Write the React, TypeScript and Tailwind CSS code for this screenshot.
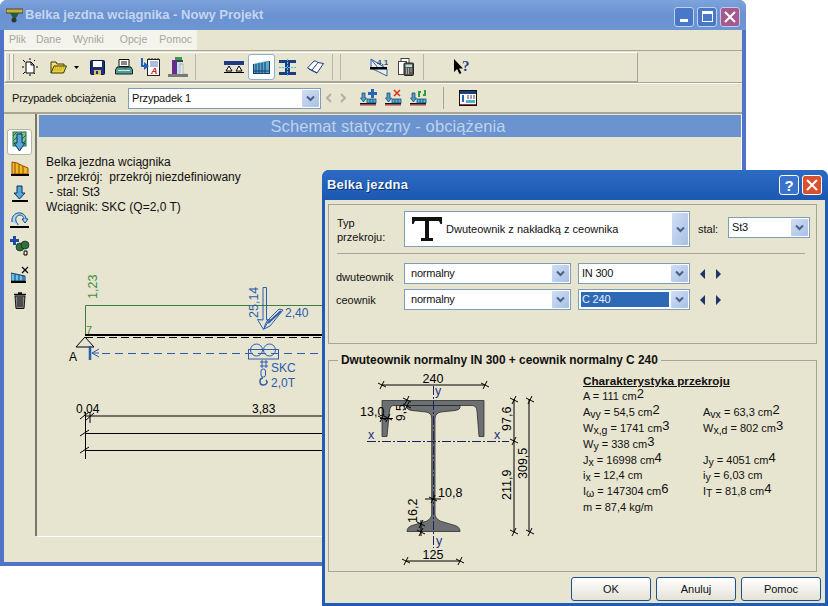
import React from 'react';

const FONT = "font-['Liberation_Sans',Arial,sans-serif]";

const Sep = ({ ml }: { ml: string }) => <div className={`${ml} w-[2px] h-[26px] border-l border-[#b8b5a2] border-r-white shrink-0`} />;

const NewDoc = () => (
  <svg width="17" height="18" viewBox="0 0 17 18" className="ml-[7px] shrink-0">
    <path d="M5 4h5l3 3v8H5z" fill="#fff" stroke="#000" />
    <path d="M10 4v3h3" fill="none" stroke="#000" />
    <path d="M1 9h2M15 9h2M2 2l2 2M14 2l-1 1M9 0v2M2 16l2-2M14 16l-1-1M9 16v2" stroke="#000" />
  </svg>
);
const Folder = () => (
  <svg width="17" height="15" viewBox="0 0 17 15" className="ml-[12px] shrink-0">
    <path d="M1 13V2h5l1 2h7v3" fill="#f5dc6c" stroke="#3a3a10" />
    <path d="M1 13l3-7h12.500l-3 7z" fill="#ecd23a" stroke="#3a3a10" />
    <path d="M5 8h9M4.500 10h8" stroke="#a88e10" strokeDasharray="1 1" />
  </svg>
);
const Floppy = () => (
  <svg width="15" height="15" viewBox="0 0 15 15" className="ml-[11px] shrink-0">
    <rect x="0.500" y="0.500" width="14" height="14" rx="1" fill="#1c2f7c" stroke="#0c1440" />
    <rect x="3" y="1" width="9" height="6" fill="#fff" />
    <rect x="4" y="10" width="7" height="5" fill="#e0c060" />
    <rect x="6" y="11" width="2" height="3" fill="#1c2f7c" />
  </svg>
);
const Printer = () => (
  <svg width="18" height="16" viewBox="0 0 18 16" className="ml-[10px] shrink-0">
    <path d="M4 .5h10v7H4z" fill="#fff" stroke="#111" />
    <path d="M6 3h6M6 5h6" stroke="#111" />
    <path d="M2 8h14l1.500 3v4H.5v-4z" fill="#4f9e96" stroke="#102020" />
    <rect x="3" y="11" width="12" height="1" fill="#c8e8e0" />
    <rect x="9" y="9" width="2" height="1" fill="#c03030" />
  </svg>
);
const Export = () => (
  <svg width="19" height="18" viewBox="0 0 19 18" className="ml-[8px] shrink-0">
    <rect x="6.500" y="1.500" width="12" height="16" fill="#fff" stroke="#222" />
    <path d="M8 1V0M11 1V0M14 1V0M17 1V0" stroke="#222" />
    <path d="M9 4h8M9 6h8M9 8h8" stroke="#5c7cc0" />
    <text x="10" y="16" fontSize="9" fontWeight="700" fontStyle="italic" fill="#d02020" fontFamily="Liberation Sans">A</text>
    <path d="M1 0v8h3" fill="none" stroke="#2262b8" strokeWidth="2" />
    <path d="M3 4l5 4-5 4z" fill="#2262b8" />
  </svg>
);
const Column = () => (
  <svg width="20" height="20" viewBox="0 0 20 20" className="ml-[8px] shrink-0">
    <rect x="7" y="0" width="7" height="3" fill="#2f9e50" />
    <rect x="4" y="3" width="5" height="14" fill="#6a2a90" />
    <rect x="9" y="3" width="6" height="14" fill="#b8e4e4" />
    <path d="M9 3h6v2H9z" fill="#444" />
    <path d="M12 7h3v10h4v1H12z" fill="#e8e8e8" stroke="#889" strokeWidth=".5" />
    <rect x="0" y="17" width="20" height="3" fill="#77797c" />
  </svg>
);
const BeamIcon = () => (
  <svg width="20" height="12" viewBox="0 0 20 12" className="ml-[27px] shrink-0">
    <rect x="0" y="0" width="20" height="4" fill="#1c3c84" />
    <path d="M5 5l-3 5h6zM15 5l-3 5h6z" fill="#fff" stroke="#000" />
    <path d="M0 11.500h20" stroke="#000" />
  </svg>
);
const Blocks = () => (
  <svg width="17" height="14" viewBox="0 0 17 14">
    <path d="M0 4l16-3.500V13H0z" fill="#5aa8c8" />
    <path d="M0 13.500h17M.5 4v9M16.500 1v12M3 4v9M6 3v10M9 3v10M12 2v11" stroke="#123c74" fill="none" />
    <path d="M1 11h15" stroke="#123c74" />
  </svg>
);
const IBeam = () => (
  <svg width="17" height="17" viewBox="0 0 17 17" className="ml-[4px] shrink-0">
    <path d="M0 1h17v3h-6v9h6v3H0v-3h6V4H0z" fill="#1c3c84" />
    <path d="M8.500 0v17M0 8.500h17" stroke="#48c0e0" strokeDasharray="2 1" />
  </svg>
);
const Book = () => (
  <svg width="17" height="14" viewBox="0 0 17 14" className="ml-[11px] shrink-0">
    <path d="M.5 8L7 1c2 0 3 .5 4 1.500l5.500 1L10 13 .5 8z" fill="#fff" stroke="#1c3c84" />
    <path d="M11 2.500L5 10M2 9l8 4" stroke="#1c3c84" fill="none" />
  </svg>
);
const MomentIcon = () => (
  <svg width="18" height="19" viewBox="0 0 18 19" className="ml-[28px] shrink-0">
    <path d="M1 1v9l16 8V11z" fill="#fff" fillOpacity=".35" stroke="#2a62b8" />
    <path d="M1 1l7 9" stroke="#2a62b8" />
    <rect x="0" y="9" width="17" height="2.500" fill="#000" />
    <text x="7" y="7" fontSize="8" fontWeight="700" fill="#2a4f90" fontFamily="Liberation Sans">4,1</text>
  </svg>
);
const Calc = () => (
  <svg width="16" height="18" viewBox="0 0 16 18" className="ml-[10px] shrink-0">
    <rect x="3" y=".5" width="8" height="12" fill="#fff" stroke="#444" />
    <rect x="0.500" y="3.500" width="8" height="13" fill="#fff" stroke="#444" />
    <rect x="6" y="5" width="9.500" height="12.500" rx="1" fill="#555" stroke="#222" />
    <rect x="7.500" y="6.500" width="6.500" height="2.500" fill="#b8e0d8" />
    <path d="M8 11h1M10 11h1M12.500 11h1M8 13h1M10 13h1M12.500 13h1M8 15h1M10 15h1" stroke="#fff" />
    <path d="M12.500 15h1" stroke="#e03020" />
  </svg>
);
const HelpCursor = () => (
  <svg width="20" height="20" viewBox="0 0 20 20" className="ml-[28px] shrink-0">
    <path d="M1 2v13l3-3 2.500 5 2-1-2.500-4.500h4z" fill="#000" />
    <text x="9" y="14" fontSize="15" fontWeight="700" fill="#2c3f80" fontFamily="Liberation Serif">?</text>
  </svg>
);

const LoadBase = ({ children, ml }: { children?: React.ReactNode; ml: string }) => (
  <svg width="17" height="18" viewBox="0 0 17 18" className={`${ml} shrink-0`}>
    <path d="M2 4h3v5h1.500L3.500 13 .5 9H2z" fill="#4aa0c8" stroke="#123c74" strokeWidth=".7" />
    <rect x="0" y="14" width="16" height="1.500" fill="#111" />
    <rect x="0" y="15.500" width="16" height="1" fill="#b03030" />
    <rect x="7" y="10" width="9" height="4" fill="#4ab4d0" stroke="#123c74" strokeWidth=".7" />
    <path d="M10 10v4M13 10v4" stroke="#123c74" strokeWidth=".7" />
    {children}
  </svg>
);

const ChevronBtn = ({ h, w = 'w-[17px]' }: { h: string; w?: string }) => (
  <div className={`${h} ${w} shrink-0 flex items-center justify-center rounded-[1px] bg-gradient-to-br from-[#d0def4] to-[#a9c0e4]`}>
    <svg width="9" height="7" viewBox="0 0 9 7">
      <path d="M1 1.500l3.500 3.500 3.500-3.500" fill="none" stroke="#4a6088" strokeWidth="2" />
    </svg>
  </div>
);

const Combo = ({ w, text, selected, pad = 'pl-[5px]' }: { w: string; text: string; selected?: boolean; pad?: string }) => (
  <div className={`${w} h-[21px] shrink-0 flex items-center bg-white border border-[#7f9db9] p-[1px] text-[11px] tracking-[-0.2px] text-[#111]`}>
    {selected ? (
      <div className="flex-1 h-[15px] bg-[#2e69b6] text-[#e8eef8] pl-[1px] ml-[1px] mr-[2px] flex items-center">{text}</div>
    ) : (
      <div className={`flex-1 ${pad}`}>{text}</div>
    )}
    <ChevronBtn h="h-[17px]" />
  </div>
);

const Arrows = () => (
  <svg width="23" height="10" viewBox="0 0 23 10" className="ml-[9px] shrink-0">
    <path d="M6 0v10L1 5zM17 0v10l5-5z" fill="#1f3468" />
  </svg>
);

const SideBtn = ({ children, active }: { children: React.ReactNode; active?: boolean }) => (
  <div className={`w-[25px] h-[26px] flex items-center justify-center ${active ? 'bg-white border border-[#b5b3a3] rounded-[3px]' : ''}`}>{children}</div>
);

const Beam = () => (
  <svg className="block" width="704" height="398" viewBox="37 137 704 398" fontFamily="Liberation Sans" fontSize="12">
    {/* wykres sil - zielony */}
    <path d="M85.500 335V305.500H420" fill="none" stroke="#3d7f3d" />
    <text transform="translate(97 299) rotate(-90)" fill="#3d8f45" fontSize="12.500">1,23</text>
    <text x="86" y="334" fill="#3d8f45" fontSize="11">7</text>
    {/* belka */}
    <path d="M85 335h335" stroke="#000" strokeWidth="2" />
    <path d="M85 337.500h335" stroke="#000" strokeDasharray="8 4" />
    <path d="M85 337l-9 10h18z" fill="none" stroke="#000" />
    <text x="69" y="361" fill="#000">A</text>
    {/* obciazenia */}
    <path d="M90 346v14" stroke="#2a5cb0" strokeWidth="2.500" />
    <path d="M92 353l7-4M92 353h7M92 353l7 4" stroke="#2a5cb0" />
    <path d="M102 353.500h320" stroke="#2a5cb0" strokeDasharray="8 5" />
    <path d="M263 287.500h3.500V320l3-.5-6 10-6-10 5.500.5z" fill="none" stroke="#2a5cb0" />
    <text transform="translate(258 318) rotate(-90)" fill="#2a5cb0" fontSize="12.500">25,14</text>
    <path d="M264 329l6-3 13-16-4-1-12 12-2 4z" fill="none" stroke="#2a5cb0" />
    <path d="M268 323l13-12" stroke="#2a5cb0" strokeWidth="2" />
    <text x="285" y="317" fill="#2a5cb0">2,40</text>
    {/* wozek */}
    <g fill="none" stroke="#2a5cb0">
      <rect x="248.500" y="349.500" width="30" height="9.500" />
      <circle cx="256.500" cy="350" r="6" />
      <circle cx="269.500" cy="350" r="6" />
      <path d="M261 361h2v2h-2zM265 361h2v2h-2zM261 365h2v2h-2zM265 365h2v2h-2z" />
      <rect x="261" y="369" width="4.500" height="8" rx="2" />
      <path d="M263 378c-4 0-4 7 0 7s5-3 3-5" strokeWidth="1.500" />
    </g>
    <text x="271" y="372" fill="#2a5cb0">SKC</text>
    <text x="271" y="387" fill="#2a5cb0">2,0T</text>
    {/* wymiary */}
    <text x="76" y="413" fill="#000">0,04</text>
    <text x="252" y="413" fill="#000">3,83</text>
    <path d="M85 416h337M85 433.500h337M85 450.500h337" stroke="#000" />
    <path d="M85.500 412v47M90 412v11M80 419l9-7M80 436l9-6M80 453l9-6M85 421l9-8" stroke="#000" fill="none" />
  </svg>
);

const Tick = ({ x, y }: { x: number; y: number }) => <path d={`M${x - 4} ${y - 2}l8 4M${x - 2} ${y + 4}l4-8`} stroke="#000" fill="none" />;

const SectionDrawing = () => (
  <svg className="block shrink-0" width="251" height="200" viewBox="329 370 251 200" fontFamily="Liberation Sans" fontSize="12.500">
    <path d="M382 385h103M406 561h54M514 399v133M529 399v133" stroke="#000" fill="none" />
    <Tick x={382} y={385} /><Tick x={485} y={385} /><Tick x={406} y={561} /><Tick x={460} y={561} />
    <Tick x={514} y={400} /><Tick x={514} y={441} /><Tick x={514} y={532} /><Tick x={530} y={400} /><Tick x={530} y={532} />
    <text x="433" y="383" textAnchor="middle" fill="#000">240</text>
    <text x="433" y="559" textAnchor="middle" fill="#000">125</text>
    {/* ceownik */}
    <path d="M382 400.500H484V436.500H479L477 411Q476.500 405.500 472 405.500H394Q390 405.500 389.500 411L387 436.500H382Z" fill="#6d7072" stroke="#1c1c1c" strokeWidth=".7" />
    {/* dwuteownik */}
    <path d="M407 405.500H460V408Q459 410 455 410.500L441 412Q435.500 413 435 418V515Q435 518 440 521L455 525.500Q460 527 460 531.500H407Q407 527 412 525.500L427 521Q431.700 518 431.700 515V418Q431.700 413 426 412L412 410.500Q408 410 407 408Z" fill="#6d7072" stroke="#1c1c1c" strokeWidth=".7" />
    {/* osie */}
    <path d="M433.500 386v162M367 441.500h142" stroke="#1a2560" strokeDasharray="9 2 2 2" fill="none" />
    <g fill="#1f2f80">
      <text x="435" y="395">y</text>
      <text x="368" y="439">x</text>
      <text x="494" y="439">x</text>
      <text x="436" y="545">y</text>
    </g>
    <g fill="#000">
      <text x="360" y="416" fontSize="12.500">13,0</text>
      <text transform="translate(405 421) rotate(-90)" fontSize="12">9,5</text>
      <text x="438" y="497">10,8</text>
      <text transform="translate(417 523) rotate(-90)">16,2</text>
      <text transform="translate(511 431) rotate(-90)">97,6</text>
      <text transform="translate(511 500) rotate(-90)">211,9</text>
      <text transform="translate(527 479) rotate(-90)">309,5</text>
    </g>
    <path d="M380 418.500h13M421 520v16M425 499h16" stroke="#000" fill="none" />
    <Tick x={388} y={418} /><Tick x={382} y={418} /><Tick x={407} y={400} /><Tick x={407} y={406} />
    <Tick x={433} y={499} /><Tick x={421} y={524} /><Tick x={421} y={532} />
  </svg>
);

const Sup = ({ children }: { children: React.ReactNode }) => <sup className="text-[13px] leading-none -top-[2px]">{children}</sup>;
const Sub = ({ children }: { children: React.ReactNode }) => <sub className="text-[10.500px] leading-none -bottom-[2px]">{children}</sub>;

const props: React.ReactNode[][] = [
  [<>A = 111 cm<Sup>2</Sup></>, null],
  [<>A<Sub>vy</Sub> = 54,5 cm<Sup>2</Sup></>, <>A<Sub>vx</Sub> = 63,3 cm<Sup>2</Sup></>],
  [<>W<Sub>x,g</Sub> = 1741 cm<Sup>3</Sup></>, <>W<Sub>x,d</Sub> = 802 cm<Sup>3</Sup></>],
  [<>W<Sub>y</Sub> = 338 cm<Sup>3</Sup></>, null],
  [<>J<Sub>x</Sub> = 16998 cm<Sup>4</Sup></>, <>J<Sub>y</Sub> = 4051 cm<Sup>4</Sup></>],
  [<>i<Sub>x</Sub> = 12,4 cm</>, <>i<Sub>y</Sub> = 6,03 cm</>],
  [<>I<Sub>ω</Sub> = 147304 cm<Sup>6</Sup></>, <>I<Sub>T</Sub> = 81,8 cm<Sup>4</Sup></>],
  [<>m = 87,4 kg/m</>, null],
];

const DialogButton = ({ label, ml }: { label: string; ml: string }) => (
  <div className={`${ml} w-[80px] h-[24px] rounded-[3px] border border-[#1d4f91] bg-gradient-to-b from-white to-[#e4e2d6] flex items-center justify-center text-[11px] text-[#111]`}>{label}</div>
);

export default function App() {
  return (
    <div className={`relative w-[828px] h-[606px] bg-white overflow-hidden ${FONT}`}>
      {/* glowne okno */}
      <div className="absolute left-0 top-0 w-[746px] h-[566px] flex flex-col rounded-t-[7px] overflow-hidden bg-[#4f74c8]">
        <div className="h-[30px] shrink-0 flex items-center bg-gradient-to-b from-[#7da3dc] via-[#6a92d0] to-[#6d96d4] pl-[6px] pr-[6px]">
          <svg width="17" height="17" viewBox="0 0 17 17" className="shrink-0">
            <rect x="0" y="2" width="17" height="4" fill="#c8b030" stroke="#222" strokeWidth=".7" />
            <path d="M4 6h9l-3 5H7z" fill="#1f5f40" />
            <circle cx="8" cy="13" r="2.500" fill="#333" />
          </svg>
          <span className="ml-[2px] text-[13px] font-bold text-[#c4d6f0]">Belka jezdna wciągnika - Nowy Projekt</span>
          <div className="ml-auto mt-[3px] flex gap-[3px] items-center">
            <div className="w-[20px] h-[20px] rounded-[3px] border border-[#c0d2f0] bg-[#4a78c8] flex items-end pl-[5px] pb-[4px]"><div className="w-[8px] h-[3px] bg-white" /></div>
            <div className="w-[20px] h-[20px] rounded-[3px] border border-[#c0d2f0] bg-[#4a78c8] flex items-center justify-center"><div className="w-[11px] h-[11px] border border-white border-t-[3px]" /></div>
            <div className="w-[20px] h-[20px] rounded-[3px] border border-[#c8c8e8] bg-[#a55a8e] flex items-center justify-center">
              <svg width="12" height="12" viewBox="0 0 12 12"><path d="M1 1l10 10M11 1L1 11" stroke="#fff" strokeWidth="2" /></svg>
            </div>
          </div>
        </div>
        <div className="flex-1 mx-[4px] mb-[4px] bg-[#e7e4cf] flex flex-col min-h-0">
          {/* menu */}
          <div className="h-[20px] shrink-0 flex">
            <div className="w-[193px] bg-[#f4f3ec] relative text-[10.500px] text-[#a7a69a] flex items-center">
              <span className="ml-[5px]">Plik</span>
              <span className="ml-[10px]">Dane</span>
              <span className="ml-[12px]">Wyniki</span>
              <span className="ml-[16px]">Opcje</span>
              <span className="ml-[12px]">Pomoc</span>
            </div>
          </div>
          {/* toolbar */}
          <div className="h-[33px] shrink-0 border-t border-[#a8a594] pt-[1px] pb-[1px] border-b">
            <div className="w-[633px] h-[30px] ml-[1px] border-t border-l border-white border-r border-b border-r-[#a8a594] border-b-[#a8a594] flex items-center">
              <div className="ml-[3px] w-[5px] h-[26px] border-x border-[#b0ad9c] bg-[#f5f4ea] shrink-0" />
              <NewDoc />
              <Folder />
              <svg width="5" height="3" viewBox="0 0 5 3" className="ml-[7px] shrink-0"><path d="M0 0h5L2.500 3z" fill="#000" /></svg>
              <Floppy />
              <Printer />
              <Export />
              <Column />
              <Sep ml="ml-[7px]" />
              <BeamIcon />
              <div className="ml-[4px] w-[27px] h-[26px] shrink-0 bg-white border border-[#8fb0d4] rounded-[3px] flex items-center justify-center"><Blocks /></div>
              <IBeam />
              <Book />
              <Sep ml="ml-[8px]" />
              <Sep ml="ml-[6px]" />
              <MomentIcon />
              <Calc />
              <Sep ml="ml-[9px]" />
              <HelpCursor />
            </div>
          </div>
          {/* przypadek obciazenia */}
          <div className="h-[31px] shrink-0 flex items-center border-t border-white border-b-2 border-b-[#a8a594] pl-[8px]">
            <span className="text-[11px] tracking-[-0.2px] text-[#111] w-[116px] shrink-0 pt-[1px]">Przypadek obciążenia</span>
            <div className="w-[193px] h-[21px] shrink-0 flex items-center bg-white border border-[#7f9db9] p-[1px] text-[11px] tracking-[-0.2px] text-[#111]">
              <div className="flex-1 pl-[2px]">Przypadek 1</div>
              <ChevronBtn h="h-[17px]" />
            </div>
            <svg width="20" height="10" viewBox="0 0 20 10" className="ml-[5px] shrink-0"><path d="M5 1L1 5l4 4M15 1l4 4-4 4" fill="none" stroke="#b0b0a8" strokeWidth="2" /></svg>
            <LoadBase ml="ml-[14px]"><path d="M8 3h3V0h3v3h3v3h-3v3h-3V6H8z" fill="#2a62b8" /></LoadBase>
            <LoadBase ml="ml-[8px]"><path d="M9 1l6 6M15 1L9 7" stroke="#d83020" strokeWidth="1.500" /></LoadBase>
            <LoadBase ml="ml-[8px]"><path d="M9 8V3h2M15 1v5h-2" fill="none" stroke="#2f9e40" strokeWidth="2" /></LoadBase>
            <div className="ml-[16px] w-[1px] h-[22px] bg-[#a8a594] shrink-0" />
            <svg width="18" height="16" viewBox="0 0 18 16" className="ml-[15px] shrink-0">
              <rect x=".5" y=".5" width="17" height="15" fill="#fff" stroke="#111" />
              <rect x="1" y="1" width="16" height="3" fill="#1c3c84" />
              <path d="M8 6h8M8 8h8" stroke="#444" strokeDasharray="2 1" />
              <path d="M4 5v7" stroke="#2a62b8" strokeWidth="2" />
              <rect x="7" y="10" width="9" height="3" fill="#4ab4d0" />
              <path d="M1 14.500h16" stroke="#b03030" />
            </svg>
          </div>
          {/* srodek */}
          <div className="h-[422px] shrink-0 flex">
            <div className="w-[33px] shrink-0 border-r-2 border-[#77776c] flex flex-col items-start pl-[3px] pt-[15px]">
              <SideBtn active>
                <svg width="15" height="22" viewBox="0 0 15 22">
                  <rect x="1" y="1" width="13" height="14" fill="#7cc090" stroke="#1f7040" />
                  <path d="M1 5l4-4M1 10l9-9M3 15L14 4M8 15l6-6" stroke="#1f7040" />
                  <path d="M5 3h5v9h3l-5.500 8L2 12h3z" fill="#56a8d8" stroke="#0c3060" />
                </svg>
              </SideBtn>
              <SideBtn>
                <svg width="18" height="17" viewBox="0 0 18 17">
                  <path d="M1 2l5 1 6 3 5 2v6H1z" fill="#e8c020" stroke="#a04010" />
                  <path d="M4 3v11M8 4v10M12 6v8" stroke="#a04010" />
                  <rect x="0" y="14" width="18" height="2" fill="#000" />
                </svg>
              </SideBtn>
              <SideBtn>
                <svg width="16" height="18" viewBox="0 0 16 18"><path d="M5 1h5v7h3l-5.500 6L2 8h3z" fill="#56a8d8" stroke="#0c3060" /><rect x="0" y="15" width="16" height="2" fill="#000" /></svg>
              </SideBtn>
              <SideBtn>
                <svg width="19" height="18" viewBox="0 0 19 18"><path d="M2 11C1 4 7 1 11 2c3 1 5 3 5 6l2 0-3 4-3-4h2c0-2-2-4-4-4-3 0-5 3-4 6 0 2 2 2 2 4" fill="#a8d8ec" stroke="#1c4c94" /><rect x="0" y="15" width="19" height="2" fill="#000" /></svg>
              </SideBtn>
              <SideBtn>
                <svg width="20" height="20" viewBox="0 0 20 20">
                  <path d="M0 3h3V0h3v3h3v3H6v3H3V6H0z" fill="#1c4ca0" />
                  <circle cx="10" cy="11" r="4" fill="#2f7040" stroke="#111" strokeWidth=".6" />
                  <circle cx="15" cy="9" r="4" fill="#2f7040" stroke="#111" strokeWidth=".6" />
                  <path d="M14 15h3v4h-3z" fill="none" stroke="#000" />
                  <path d="M13 16h1" stroke="#d0c030" />
                </svg>
              </SideBtn>
              <div className="h-[2px]" />
              <SideBtn>
                <svg width="18" height="17" viewBox="0 0 18 17">
                  <path d="M0 7l14 3v5H0z" fill="#6cc0e0" stroke="#123c74" />
                  <path d="M4 8v7M8 9v6M12 9v6" stroke="#123c74" />
                  <rect x="0" y="15" width="15" height="2" fill="#000" />
                  <path d="M11 1l6 6M17 1l-6 6" stroke="#000" strokeWidth="1.200" />
                </svg>
              </SideBtn>
              <SideBtn>
                <svg width="12" height="17" viewBox="0 0 12 17">
                  <path d="M4 1h4M0 2.500h12" stroke="#111" strokeWidth="1.500" />
                  <path d="M1 4h10l-1 12.500H2z" fill="#888" stroke="#111" />
                  <path d="M4 5v10M6 5v10M8 5v10" stroke="#111" />
                </svg>
              </SideBtn>
            </div>
            <div className="flex-1 min-w-0 flex flex-col border-r border-white mt-[1px]">
              <div className="h-[22px] shrink-0 bg-[#6a93cf] flex items-center justify-center text-[16.500px] tracking-[0.1px] text-[#bfd2ee] ml-[2px] pr-[4px]">Schemat statyczny - obciążenia</div>
              <div className="relative flex-1 min-h-0 overflow-hidden">
                <Beam />
                <div className="absolute left-[9px] top-[18px] text-[12px] leading-[15px] text-[#111] whitespace-pre">
                  {'Belka jezdna wciągnika\n - przekrój:  przekrój niezdefiniowany\n - stal: St3\nWciągnik: SKC (Q=2,0 T)'}
                </div>
              </div>
            </div>
          </div>
          <div className="h-[1px] ml-[33px] bg-white shrink-0" />
        </div>
      </div>

      {/* okno dialogowe */}
      <div className="absolute left-[322px] top-[170px] w-[506px] h-[436px] rounded-t-[7px] bg-[#1f5cb6] flex flex-col overflow-hidden">
        <div className="h-[30px] shrink-0 flex items-center pl-[5px] pr-[6px] bg-gradient-to-b from-[#2c6bc4] to-[#1c58b2]">
          <span className="text-[13px] font-bold text-[#f0f4fa] tracking-[0.2px] [text-shadow:1px_1px_0_#0c3070]">Belka jezdna</span>
          <div className="ml-auto flex gap-[3px]">
            <div className="w-[20px] h-[20px] rounded-[3px] border border-white bg-[#3a72cc] flex items-center justify-center text-[15px] font-bold text-white leading-none">?</div>
            <div className="w-[20px] h-[20px] rounded-[3px] border border-white bg-[#d8502c] flex items-center justify-center">
              <svg width="12" height="12" viewBox="0 0 12 12"><path d="M1 1l10 10M11 1L1 11" stroke="#fff" strokeWidth="2" /></svg>
            </div>
          </div>
        </div>
        <div className="flex-1 mx-[3px] mb-[3px] bg-[#e7e4cf] px-[3px] pt-[4px] flex flex-col min-h-0">
          {/* typ przekroju */}
          <div className="h-[140px] w-[489px] shrink-0 border border-[#a8a594] pl-[8px] pt-[6px]">
            <div className="flex items-start">
              <div className="w-[67px] pt-[5px] text-[11px] leading-[14px] text-[#111]">Typ<br />przekroju:</div>
              <div className="w-[286px] h-[36px] flex items-center bg-white border border-[#7f9db9] p-[1px]">
                <svg width="30" height="26" viewBox="0 0 30 26" className="ml-[6px] shrink-0">
                  <path d="M0 1h30v7h-1.500L27 5H17v17h4v3H9v-3h4V5H3L1.500 8H0z" fill="#111" />
                </svg>
                <span className="ml-[4px] text-[11px] text-[#111] flex-1">Dwuteownik z nakładką z ceownika</span>
                <ChevronBtn h="h-[32px]" w="w-[16px]" />
              </div>
              <span className="ml-[8px] mt-[10px] text-[11px] text-[#111] w-[30px] shrink-0">stal:</span>
              <div className="mt-[6px]"><Combo w="w-[82px]" text="St3" pad="pl-[2px]" /></div>
            </div>
            <div className="h-[1px] w-[468px] bg-[#a8a594] mt-[6px]" />
            <div className="flex items-center mt-[9px]">
              <span className="w-[67px] text-[11px] leading-[11px] text-[#111] pt-[7px] -ml-[1px] mr-[1px]">dwuteownik</span>
              <Combo w="w-[167px]" text="normalny" />
              <div className="ml-[7px]"><Combo w="w-[112px]" text="IN 300" pad="pl-[2px]" /></div>
              <Arrows />
            </div>
            <div className="flex items-center mt-[5px]">
              <span className="w-[67px] text-[11px] leading-[11px] text-[#111] pt-[1px] -ml-[1px] mr-[1px]">ceownik</span>
              <Combo w="w-[167px]" text="normalny" />
              <div className="ml-[7px]"><Combo w="w-[112px]" text="C 240" selected /></div>
              <Arrows />
            </div>
          </div>
          {/* charakterystyka */}
          <div className="relative mt-[16px] h-[212px] w-[489px] shrink-0 border border-[#a8a594] flex">
            <span className="absolute left-[9px] -top-[8px] px-[3px] bg-[#e7e4cf] text-[11.900px] leading-[15px] font-bold text-[#111] whitespace-nowrap">Dwuteownik normalny IN 300 + ceownik normalny C 240</span>
            <div className="mt-[9px]"><SectionDrawing /></div>
            <div className="ml-[3px] mt-[12px] text-[11px] text-[#111]">
              <div className="h-[16px] leading-[16px] text-[11.700px] font-bold underline whitespace-nowrap">Charakterystyka przekroju</div>
              {props.map((row, i) => (
                <div key={i} className="grid grid-cols-[120px_110px] h-[15.900px] leading-[15.900px] whitespace-nowrap">
                  <div>{row[0]}</div>
                  <div>{row[1]}</div>
                </div>
              ))}
            </div>
          </div>
          <div className="flex mt-[5px]">
            <DialogButton label="OK" ml="ml-[243px]" />
            <DialogButton label="Anuluj" ml="ml-[5px]" />
            <DialogButton label="Pomoc" ml="ml-[5px]" />
          </div>
        </div>
      </div>
    </div>
  );
}
